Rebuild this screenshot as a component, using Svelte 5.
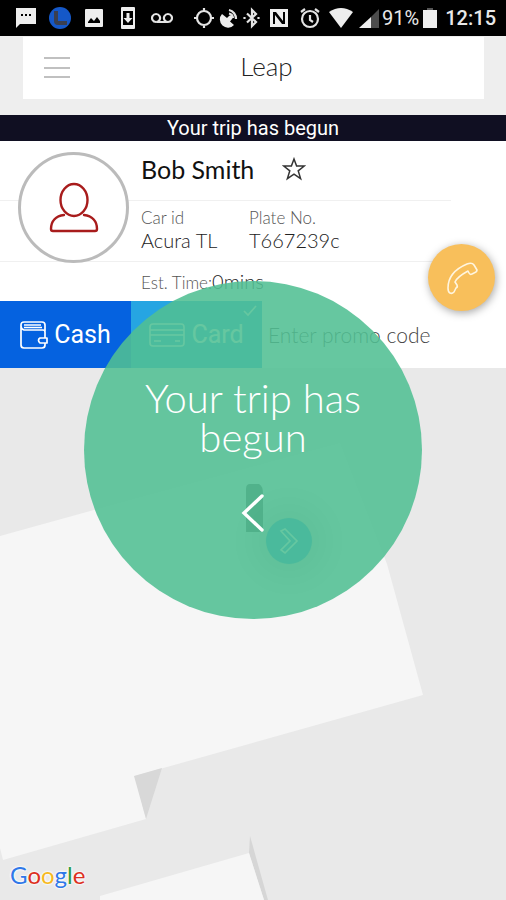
<script>
    // Every glyph is drawn around 0,0 in a cell that is w wide and 24 high
    const notifications = [
        { w: 22, fill: "M-10-10H10V6H-6L-10 10ZM-5-4V-2H-3V-4ZM-1-4V-2H1V-4ZM3-4V-2H5V-4Z" },
        { w: 22, logo: true },
        { w: 22, fill: "M-8-9H8Q9-9 9-8V8Q9 9 8 9H-8Q-9 9-9 8V-8Q-9-9-8-9ZM-6 5H6V3L3-1L0 3L-3 0L-6 4Z" },
        { w: 22, fill: "M-6-11H6Q7-11 7-10V10Q7 11 6 11H-6Q-7 11-7 10V-10Q-7-11-6-11ZM-5-7V7H5V-7ZM-1.5-5H1.5V0H4.5L0 5L-4.5 0H-1.5Z" },
        { w: 22, line: "M-6 4A4 4 0 1 1-5.9 4H6A4 4 0 1 0 5.9 4" },
    ];
    const system = [
        { w: 24, line: "M-7 0A7 7 0 1 0 7 0A7 7 0 1 0-7 0M0-10V-7M0 10V7M-10 0H-7M10 0H7" },
        { w: 26, fill: "M-7-4A8 8 0 0 0 5 7L1 3.5L3 1A2 2 0 0 0 0-2L-2 0Z", line: "M0-8A9 9 0 0 1 7 1M0-4.5A5 5 0 0 1 4 0" },
        { w: 20, line: "M-5-4.5L4 4L0 8V-8L4-4L-5 4.5M6.5-1V1M-7.5-1V1" },
        { w: 34, fill: "M-9-9H9V9H-9ZM-6-6V6H-4V-3L3 6H6V-6H4V3L-3-6Z" },
        { w: 28, line: "M-8 1A8 8 0 1 0 8 1A8 8 0 1 0-8 1M0-3V2L3 4M-9-6L-5-9M9-6L5-9" },
        { w: 34, fill: "M-12-6Q0-14 12-6L0 10Z" },
        { w: 22, fill: "M-10 10L2-1V10Z", dim: "M2-1L10-9V10H2Z" },
    ];

    const google = [
        ["G", "blue"],
        ["o", "red"],
        ["o", "yellow"],
        ["g", "blue"],
        ["l", "green"],
        ["e", "red"],
    ];

    let payment = $state("cash");
    let favourite = $state(false);
    let promo = $state("");
</script>

{#snippet glyph(icon)}
    <svg width={icon.w} height="24" viewBox="{-icon.w / 2} -12 {icon.w} 24" aria-hidden="true">
        {#if icon.logo}
            <circle r="11" fill="#1558c8" />
            <path d="M-4-7V3Q-4 5-2 5H7" fill="none" stroke="#3a3f50" stroke-width="4" />
        {/if}
        {#if icon.dim}<path d={icon.dim} fill="#4c4c4c" />{/if}
        {#if icon.fill}<path d={icon.fill} fill="#eee" fill-rule="evenodd" />{/if}
        {#if icon.line}<path d={icon.line} fill="none" stroke="#e4e4e4" stroke-width="2.2" />{/if}
    </svg>
{/snippet}

<div class="app">
    <div class="status">
        <div class="notifications">
            {#each notifications as icon}{@render glyph(icon)}{/each}
        </div>
        <div class="system">
            {#each system as icon}{@render glyph(icon)}{/each}
            <span class="percent">91%</span>
            <svg width="14" height="20" viewBox="0 0 14 20" aria-hidden="true">
                <path d="M4 0H10V2H4Z" fill="#555" />
                <path d="M0 2H14V20H0Z" fill="#eee" />
            </svg>
            <span class="clock">12:15</span>
        </div>
    </div>

    <div class="top">
        <header>
            <button class="menu" aria-label="Menu">
                <svg width="28" height="24" viewBox="0 0 28 24">
                    <path d="M1 2H27M1 12H27M1 21H27" stroke="#c0c0c0" stroke-width="2" />
                </svg>
            </button>
            <h1>Leap</h1>
        </header>
    </div>

    <p class="banner">Your trip has begun</p>

    <section class="driver">
        <div class="row name">
            <h2>Bob Smith</h2>
            <button class="star" aria-label="Favourite" onclick={() => (favourite = !favourite)}>
                <svg width="24" height="24" viewBox="0 0 24 24">
                    <path
                        d="M12 2L14.6 9H22.3L16.2 13.8L18.6 21.6L12 17.2L5.4 21.6L7.8 13.8L1.7 9H9.4Z"
                        fill={favourite ? "#333" : "none"}
                        stroke="#333"
                        stroke-width="1.5"
                    />
                </svg>
            </button>
        </div>
        <dl class="row car">
            <div>
                <dt>Car id</dt>
                <dd>Acura TL</dd>
            </div>
            <div>
                <dt>Plate No.</dt>
                <dd>T667239c</dd>
            </div>
        </dl>
        <p class="row time"><span>Est. Time:</span>0mins</p>

        <div class="avatar">
            <svg width="52" height="52" viewBox="0 0 52 52" aria-hidden="true">
                <g fill="none" stroke="#a81c1c" stroke-width="2.4" stroke-linecap="round">
                    <ellipse cx="26" cy="18" rx="13.5" ry="16" />
                    <path d="M16 33C8 34 3 39 3 47Q3 49 5 49H47Q49 49 49 47C49 39 44 34 36 33" />
                </g>
            </svg>
        </div>
        <button class="call" aria-label="Call driver">
            <svg width="36" height="36" viewBox="0 0 36 36">
                <path
                    d="M4 28Q4 12 23 4Q28 2 30 5L33 10Q33 12 30 13L28 14Q26 15 25 13L24 11Q13 17 11 22L13 25Q14 27 12 28L10 32Q8 34 6 33Q4 32 4 28Z"
                    fill="none"
                    stroke="#fff5df"
                    stroke-width="1.6"
                    stroke-linejoin="round"
                />
            </svg>
        </button>
    </section>

    <div class="payment">
        <button class="cash" aria-pressed={payment === "cash"} onclick={() => (payment = "cash")}>
            <svg width="28" height="28" viewBox="0 0 28 28" aria-hidden="true">
                <g fill="none" stroke="#fff" stroke-width="1.7" stroke-linejoin="round">
                    <path d="M25 17V11Q25 9 23 9H4Q1 8 1 5V4Q1 1 4 1H22Q25 1 25 4V10M1 5V24Q1 27 4 27H22Q25 27 25 24V22" />
                    <path d="M4 4H21M4 6.5H22M27 17H20Q17 19 20 22H27Z" />
                </g>
            </svg>
            Cash
        </button>
        <button class="card" aria-pressed={payment === "card"} onclick={() => (payment = "card")}>
            <svg width="36" height="24" viewBox="0 0 36 24" aria-hidden="true">
                <g fill="none" stroke="#fff" stroke-width="1.6">
                    <rect x="1" y="1" width="34" height="22" rx="3" />
                    <path d="M1 7H35M1 12H35M5 18H12M26 18H31" />
                </g>
            </svg>
            Card
            <svg class="tick" width="14" height="12" viewBox="0 0 14 12" aria-hidden="true">
                <path d="M1 6L5 10L13 1" fill="none" stroke="#fff" stroke-width="1.6" />
            </svg>
        </button>
        <input aria-label="Promo code" placeholder="Enter promo code" bind:value={promo} />
    </div>

    <main class="map">
        <svg class="ground" viewBox="0 0 506 532" preserveAspectRatio="xMidYMin slice" aria-hidden="true">
            <path d="M0 168L130 132L340 75L387 196L423 327L135 408L146 451L3 492L0 480Z" fill="#f6f6f6" />
            <path d="M134 408L162 400L146 451Z" fill="#d8d8d8" />
            <path d="M250 468L268 532H264L249 485Z" fill="#d6d6d6" />
            <path d="M100 528L249 485L264 532H100Z" fill="#f6f6f6" />
            <path d="M246 121Q246 116 250 116H259Q263 118 263 126V164H246Z" fill="#555" />
        </svg>
        <button class="go" aria-label="Next">
            <svg width="20" height="28" viewBox="0 0 20 28">
                <path d="M2 4L6 2L18 14L6 26L2 23L11 14Z" fill="none" stroke="#fff" stroke-width="1.6" />
            </svg>
        </button>
        <div class="google">
            {#each google as [letter, colour]}<span class={colour}>{letter}</span>{/each}
        </div>
    </main>

    <div class="overlay">
        <div class="bubble" role="status">
            <p>Your trip has begun</p>
            <button aria-label="Back">
                <svg width="24" height="40" viewBox="0 0 24 40">
                    <path
                        d="M21 3L3 20L21 37"
                        fill="none"
                        stroke="#fff"
                        stroke-width="3.4"
                        stroke-linecap="round"
                    />
                </svg>
            </button>
        </div>
    </div>
</div>

<style>
    :global(body) {
        margin: 0;
    }

    .app {
        position: relative;
        display: flex;
        flex-direction: column;
        min-height: 100vh;
        background: #eee;
        color: #222;
        font-family: Lato, "Liberation Sans", sans-serif;
        font-weight: 300;
    }

    h1,
    h2,
    p,
    dl,
    dd {
        margin: 0;
        font-weight: inherit;
    }

    svg {
        display: block;
        flex: none;
    }

    button {
        padding: 0;
        border: 0;
        background: none;
        color: inherit;
        font: inherit;
        cursor: pointer;
    }

    .status {
        display: flex;
        justify-content: space-between;
        align-items: center;
        height: 36px;
        padding: 0 10px 0 15px;
        background: #000;
        color: #e8e8e8;
        font: 500 20px/24px Roboto, sans-serif;
    }
    .notifications,
    .system {
        display: flex;
        align-items: center;
    }
    .notifications {
        gap: 12px;
    }
    .percent {
        padding: 0 4px 0 2px;
        font-weight: 400;
    }
    .clock {
        padding-left: 8px;
    }

    .top {
        padding: 1px 22px 16px 23px;
    }
    header {
        display: grid;
        grid-template-columns: 28px 1fr 28px;
        align-items: center;
        height: 62px;
        padding: 0 20px;
        background: #fff;
    }
    h1 {
        padding: 0 0 4px 26px;
        font-size: 26px;
        line-height: 30px;
        text-align: center;
    }

    .banner {
        background: #100f22;
        color: #fff;
        font: 400 20px/26px Roboto, sans-serif;
        text-align: center;
    }

    .driver {
        position: relative;
        background: #fff;
    }
    .row {
        box-sizing: border-box;
        margin-right: 55px;
        padding-left: 141px;
    }
    .name {
        display: flex;
        align-items: center;
        gap: 28px;
        height: 60px;
        padding-bottom: 3px;
        border-bottom: 1px solid #f0f0f0;
    }
    h2 {
        color: #111;
        font-size: 25px;
        font-weight: 400;
    }
    .car {
        display: grid;
        grid-template-columns: 108px 1fr;
        height: 61px;
        padding-top: 5px;
        border-bottom: 1px solid #f0f0f0;
    }
    dt {
        color: #555;
        font-size: 17px;
        line-height: 23px;
    }
    dd {
        font-size: 20px;
        line-height: 23px;
    }
    .time {
        height: 39px;
        font-size: 20px;
        line-height: 38px;
    }
    .time span {
        color: #555;
        font-size: 17px;
    }

    .avatar {
        position: absolute;
        top: 11px;
        left: 18px;
        display: grid;
        place-items: center;
        width: 105px;
        height: 105px;
        border: 3px solid #bbb;
        border-radius: 50%;
        background: #fff;
    }
    .call {
        position: absolute;
        top: 103px;
        right: 11px;
        display: grid;
        place-items: center;
        width: 67px;
        height: 67px;
        border-radius: 50%;
        background: #f8bf5b;
        box-shadow: 1px 2px 8px rgba(0, 0, 0, 0.35);
    }

    .payment {
        display: grid;
        grid-template-columns: 131px 131px 1fr;
        height: 67px;
        background: #fff;
    }
    .payment button {
        position: relative;
        display: flex;
        align-items: center;
        justify-content: center;
        gap: 6px;
        color: #fff;
        font: 400 25px/30px Roboto, sans-serif;
    }
    .payment .cash {
        background: #0562e0;
    }
    .payment .card {
        background: #26a5e2;
    }
    .tick {
        position: absolute;
        top: 4px;
        right: 5px;
    }
    input {
        min-width: 0;
        padding: 0 6px;
        border: 0;
        background: #fff;
        color: #333;
        font: inherit;
        font-size: 21px;
    }
    input::placeholder {
        color: #444;
        opacity: 1;
    }

    .map {
        position: relative;
        flex: 1;
        min-height: 320px;
        background: #e9e9e9;
    }
    .ground {
        position: absolute;
        width: 100%;
        height: 100%;
    }
    .go {
        position: absolute;
        top: 150px;
        left: calc(50% + 13px);
        display: grid;
        place-items: center;
        width: 46px;
        height: 46px;
        border-radius: 50%;
        background: #1c95d8;
        box-shadow: 0 0 36px 12px rgba(0, 0, 0, 0.25);
    }
    .google {
        position: absolute;
        bottom: 10px;
        left: 10px;
        font: 400 24px/30px Lato, sans-serif;
        text-shadow: 0 0 2px #fff, 0 0 2px #fff, 0 0 3px #fff;
    }
    .blue {
        color: #2f78e8;
    }
    .red {
        color: #dc3022;
    }
    .yellow {
        color: #f6b922;
    }
    .green {
        color: #2d9c46;
    }

    .overlay {
        position: absolute;
        inset: 0;
        display: grid;
        place-items: center;
        pointer-events: none;
    }
    .bubble {
        box-sizing: border-box;
        display: flex;
        flex-direction: column;
        align-items: center;
        gap: 36px;
        width: 338px;
        height: 338px;
        padding: 98px 50px 0;
        border-radius: 50%;
        background: rgba(81, 191, 147, 0.88);
        color: #fff;
        pointer-events: auto;
    }
    .bubble p {
        font-size: 40px;
        line-height: 39px;
        text-align: center;
    }
</style>
